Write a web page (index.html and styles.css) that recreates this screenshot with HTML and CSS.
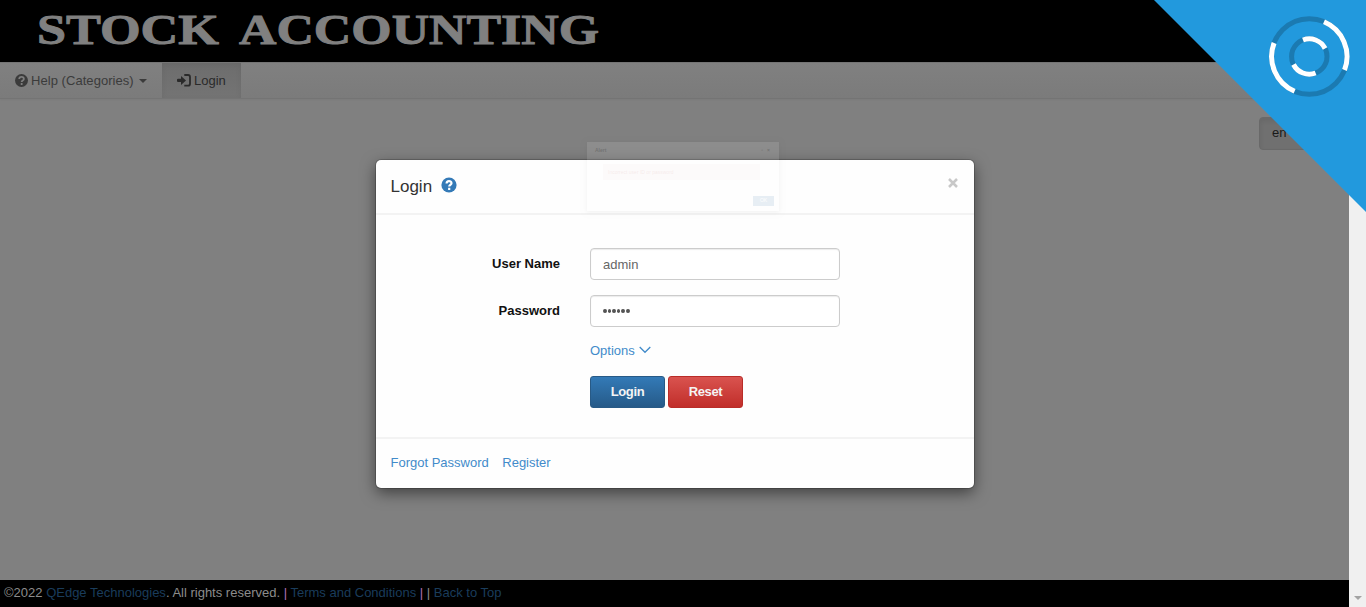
FILE: index.html
```html
<!DOCTYPE html>
<html lang="en">
<head>
<meta charset="utf-8">
<title>Stock Accounting</title>
<link rel="stylesheet" href="styles.css">
</head>
<body>
<div class="page">
  <header class="brand">
    <svg class="brand-name" width="620" height="62">
      <text x="37" y="44" textLength="182" lengthAdjust="spacingAndGlyphs">STOCK</text>
      <text x="239" y="44" textLength="360" lengthAdjust="spacingAndGlyphs">ACCOUNTING</text>
    </svg>
  </header>
  <nav class="navbar">
    <a class="nav-item nav-help">
      <svg class="icon" width="13" height="13" viewBox="0 0 16 16"><circle cx="8" cy="8" r="8" fill="currentColor"/><path class="cut" d="M5.2 6.3C5.2 2.6 10.9 2.8 10.9 6.1C10.9 8 8.2 8.1 8.2 9.8M8.2 11.2V13.6"/></svg>
      <span class="help-text">Help (Categories)</span><i class="caret"></i>
    </a>
    <a class="nav-item nav-login">
      <svg class="icon" width="14" height="13" viewBox="0 0 14 13"><path d="M1 4.8H4V1.9L9 6.4L4 10.9V8H1Q0 8 0 7V5.8Q0 4.8 1 4.8Z" fill="currentColor"/><path d="M7.3 1H11Q13 1 13 3V9.7Q13 11.7 11 11.7H7.3" fill="none" stroke="currentColor" stroke-width="1.8"/></svg>
      <span>Login</span>
    </a>
  </nav>
  <main class="content"><div class="language"><span class="lang-label">en</span></div></main>
  <footer class="footer"><span class="footer-text">©2022 <a>QEdge Technologies</a>. All rights reserved. <b class="bar">|</b> <a>Terms and Conditions</a> <b class="bar">|</b> | <a>Back to Top</a></span></footer>
</div>
<div class="scrollbar"><i></i></div>

<section class="modal">
  <div class="modal-header">
    <h1>Login</h1>
    <svg class="help-icon" width="16" height="16" viewBox="0 0 16 16"><circle cx="8" cy="8" r="7.6" fill="#347ab7"/><path class="mark" d="M5.6 6.5C5.6 3.4 10.5 3.5 10.5 6.2C10.5 7.8 8.2 8.1 8.2 9.6M8.2 10.8V12.9"/></svg>
    <svg class="close" width="10" height="10" viewBox="0 0 10 10"><path d="M1 1L9 9M9 1L1 9" stroke="#c8c8c8" stroke-width="2.5"/></svg>
  </div>
  <div class="modal-body">
    <div class="field"><label>User Name</label><div class="input">admin</div></div>
    <div class="field"><label>Password</label><div class="input dots"><i></i><i></i><i></i><i></i><i></i><i></i></div></div>
    <a class="options">Options <svg width="12" height="8" viewBox="0 0 12 8"><path d="M.7 1L6 6.3L11.3 1" fill="none" stroke="#428bca" stroke-width="1.3"/></svg></a>
    <div class="buttons"><div class="button primary">Login</div><div class="button danger">Reset</div></div>
  </div>
  <div class="modal-footer"><a class="forgot">Forgot Password</a><a>Register</a></div>
</section>

<aside class="ghost">
  <div class="ghost-head"><span>Alert</span><span class="ghost-tools">▫ &nbsp; ×</span></div>
  <div class="ghost-message">Incorrect user ID or password</div>
  <div class="ghost-button">OK</div>
</aside>

<svg class="loader" width="212" height="212" viewBox="0 0 212 212">
  <path d="M0 0H212V212Z" fill="#2299dd"/>
  <g transform="translate(155.3 56.5)" fill="none" stroke-width="5">
    <circle r="37.7" stroke="#1b7ab1"/><circle r="17.7" stroke="#1b7ab1"/>
    <g stroke="#fff">
      <path d="M14.7 -34.7A37.7 37.7 0 0 1 35.2 13.5M-14.7 34.7A37.7 37.7 0 0 1 -35.2 -13.5"/>
      <path d="M-6.3 -16.5A17.7 17.7 0 0 1 15.8 -8M6.3 16.5A17.7 17.7 0 0 1 -15.8 8"/>
    </g>
  </g>
</svg>
</body>
</html>
```
FILE: styles.css
```css
* { box-sizing: border-box; }
body {
  margin: 0;
  position: relative;
  display: flex;
  width: 1366px;
  height: 607px;
  overflow: hidden;
  font: 13px/18px "Liberation Sans", Arial, sans-serif;
}
.page { width: 1349px; height: 607px; display: flex; flex-direction: column; background: #808080; }
.brand { height: 62px; background: #000; }
.brand-name { display: block; }
.brand-name text { font: bold 42.5px "Liberation Serif", serif; fill: #808080; stroke: #808080; stroke-width: .9px; }
.navbar {
  display: flex;
  height: 37px;
  border-top: 1px solid #747474;
  border-bottom: 1px solid #747474;
  background: linear-gradient(#808080, #7b7b7b);
  box-shadow: 0 1px 2px rgba(0, 0, 0, .05);
}
.nav-item { display: flex; align-items: center; color: #3b3b3b; }
.nav-help { width: 162px; padding-left: 15px; gap: 3px; }
.help-text { letter-spacing: .05px; }
.nav-login {
  width: 79px;
  padding-left: 15px;
  gap: 3px;
  color: #2a2a2a;
  background: linear-gradient(#6d6d6d, #747474);
  box-shadow: inset 0 2px 6px rgba(0, 0, 0, .06);
}
.icon { flex: none; margin-top: -1px; }
.cut, .mark { fill: none; stroke: #7e7e7e; stroke-width: 2.2; }
.mark { stroke: #fff; }
.caret { margin-left: 2px; border: 4px solid transparent; border-top-color: #3b3b3b; border-bottom: 0; }
.content { flex: 1; display: flex; justify-content: flex-end; align-items: flex-start; padding: 18px 15px 0; }
.language {
  width: 75px;
  height: 33px;
  padding: 6px 12px;
  border: 1px solid #696969;
  border-radius: 4px;
  background: #707070;
  box-shadow: inset 0 3px 5px rgba(0, 0, 0, .08);
  color: #191919;
}
.footer { height: 27px; padding: 4px 0 0 4px; background: #000; color: #8c8c8c; white-space: nowrap; }
.footer a { color: #1a3c5b; }
.bar { font-weight: normal; color: #b070b8; }
.scrollbar { width: 17px; display: flex; justify-content: center; align-items: flex-end; padding-bottom: 7px; background: #f0f0f0; }
.scrollbar i { border: 4px solid transparent; border-top-color: #a3a3a3; border-bottom: 0; }

.modal {
  position: absolute;
  left: 376px;
  top: 160px;
  width: 598px;
  height: 328px;
  display: flex;
  flex-direction: column;
  border-radius: 5px;
  background: #fefefe;
  box-shadow: 0 0 0 1px rgba(0, 0, 0, .18), 0 5px 15px rgba(0, 0, 0, .5);
}
.modal-header { height: 55px; display: flex; align-items: flex-start; padding: 17px 16px 0 14.5px; border-bottom: 2px solid #f3f3f3; }
h1 { margin: 0; font-size: 17px; line-height: 20px; font-weight: normal; color: #333; }
.help-icon { margin-left: 9px; }
.close { margin: 1px 0 0 auto; }
.modal-body { flex: 1; padding: 33px 0 0; }
.field { display: flex; align-items: center; height: 32px; margin-bottom: 15px; }
label { width: 184px; margin-right: 30px; text-align: right; font-weight: bold; color: #111; }
.input { width: 250px; height: 32px; padding: 7px 12px; border: 1px solid #ccc; border-radius: 4px; background: #fff; box-shadow: inset 0 1px 1px rgba(0, 0, 0, .08); color: #666; }
.dots { display: flex; align-items: center; gap: 1px; padding-left: 12px; }
.dots i { width: 3.6px; height: 4px; border-radius: 50%; background: #555; }
.options { display: flex; align-items: center; gap: 4px; width: 80px; margin: 0 0 16px 214px; color: #428bca; }
.options svg { margin-top: -3px; }
.buttons { display: flex; gap: 3px; margin-left: 214px; }
.button { width: 75px; height: 32px; border: 1px solid; border-radius: 3px; line-height: 30px; text-align: center; font-weight: bold; letter-spacing: -.35px; color: #f4f4f4; }
.primary { border-color: #285a86; background: linear-gradient(#337ab7, #265a88); }
.danger { border-color: #b92c28; background: linear-gradient(#d9534f, #c12e2a); }
.modal-footer { height: 51px; display: flex; gap: 13.5px; padding: 15px 14.5px; border-top: 2px solid #f3f3f3; color: #428bca; }

.ghost {
  position: absolute;
  left: 587px;
  top: 142px;
  width: 192px;
  height: 69px;
  display: flex;
  flex-direction: column;
  background: #fff;
  opacity: .1;
  box-shadow: 0 1px 5px rgba(0, 0, 0, .5);
  font-size: 5px;
  line-height: 6px;
}
.ghost-head { height: 22px; display: flex; justify-content: space-between; padding: 5px 9px 0 8px; font-weight: bold; }
.ghost-message { width: 157px; height: 16px; margin-left: 16px; padding: 5px; background: #f2dede; color: #a94442; }
.ghost-button { align-self: flex-end; width: 21px; height: 10px; margin: 16px 5px 0 0; background: #2b6ca3; color: #fff; text-align: center; line-height: 9px; }
.loader { position: absolute; right: 0; top: 0; }
```
